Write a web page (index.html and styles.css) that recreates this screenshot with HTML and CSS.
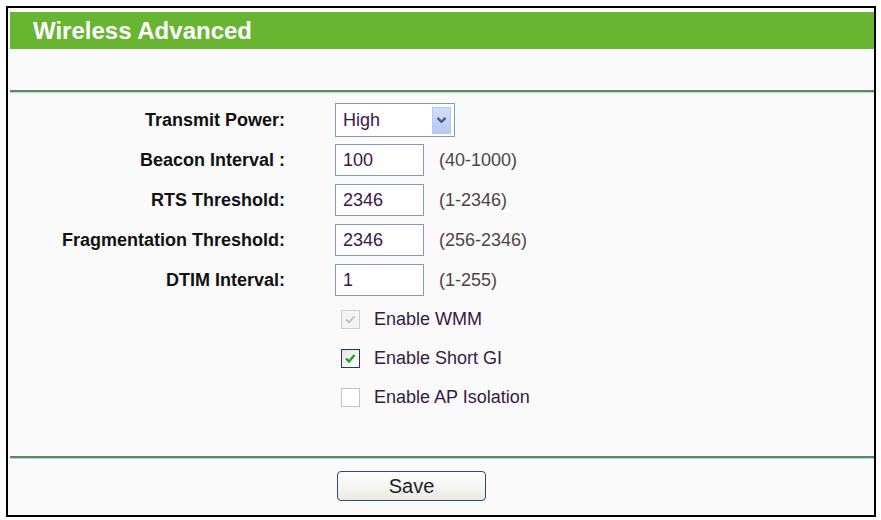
FILE: index.html
```html
<!DOCTYPE html>
<html lang="en">
<head>
    <meta charset="UTF-8">
    <title>Wireless Advanced</title>
    <link rel="stylesheet" href="styles.css">
</head>
<body>
    <div class="panel">
        <div class="title">Wireless Advanced</div>
        <div class="spacer"></div>
        <div class="rule"></div>

        <div class="form">
            <div class="row">
                <label>Transmit Power:</label>
                <div class="field">
                    <div class="select">
                        <span>High</span>
                        <span class="arrow">
                            <svg width="11" height="8" viewBox="0 0 11 8"><path d="M1.5 1.8 L5.5 5.8 L9.5 1.8" fill="none" stroke="#4a5d82" stroke-width="2.4"/></svg>
                        </span>
                    </div>
                </div>
            </div>
            <div class="row">
                <label>Beacon Interval :</label>
                <div class="field"><div class="input">100</div><span class="range">(40-1000)</span></div>
            </div>
            <div class="row">
                <label>RTS Threshold:</label>
                <div class="field"><div class="input">2346</div><span class="range">(1-2346)</span></div>
            </div>
            <div class="row">
                <label>Fragmentation Threshold:</label>
                <div class="field"><div class="input">2346</div><span class="range">(256-2346)</span></div>
            </div>
            <div class="row">
                <label>DTIM Interval:</label>
                <div class="field"><div class="input">1</div><span class="range">(1-255)</span></div>
            </div>
            <div class="row check">
                <span class="blank"></span>
                <div class="field">
                    <span class="box disabled"><svg width="17" height="17" viewBox="0 0 17 17"><path d="M4 8.5 L7 11.5 L12.5 5" fill="none" stroke="#bdbdbd" stroke-width="1.8"/></svg></span>
                    <span class="opt">Enable WMM</span>
                </div>
            </div>
            <div class="row check">
                <span class="blank"></span>
                <div class="field">
                    <span class="box on"><svg width="17" height="17" viewBox="0 0 17 17"><path d="M4 8.5 L7 11.5 L12.5 5" fill="none" stroke="#1d9f22" stroke-width="2.4"/></svg></span>
                    <span class="opt">Enable Short GI</span>
                </div>
            </div>
            <div class="row check">
                <span class="blank"></span>
                <div class="field">
                    <span class="box"></span>
                    <span class="opt">Enable AP Isolation</span>
                </div>
            </div>
        </div>

        <div class="rule rule-bottom"></div>
        <div class="actions">
            <button type="button">Save</button>
        </div>
    </div>
</body>
</html>
```

FILE: styles.css
```css
body { margin: 6px 5px 6px 6px; font-family: "Liberation Sans", Arial, sans-serif; background: #fff; }
.panel { border: 2px solid #000; background: #fafafa; padding: 4px 0 14px 2px; }
.title { height: 37px; background: #68b532; color: #fff; font-size: 24px; font-weight: bold; display: flex; align-items: center; padding-left: 23px; padding-top: 1px; box-sizing: border-box; }
.spacer { height: 41px; }
.rule { height: 2px; background: #55896a; box-shadow: 0 1px 0 #b9dcc4; }
.rule-bottom { margin-top: 39px; }
.form { display: grid; grid-template-columns: 275px 1fr; column-gap: 50px; padding-top: 8px; }
.row { display: contents; }
.row label, .row .field { height: 40px; display: flex; align-items: center; }
.row label { justify-content: flex-end; font-size: 18px; font-weight: bold; color: #111; }
.row.check .field, .row.check .blank { height: 39px; }
.field { font-size: 18px; }
.select { width: 120px; height: 34px; box-sizing: border-box; border: 1px solid #7f9db9; background: #fff; display: flex; align-items: center; justify-content: space-between; padding: 0 3px 0 7px; color: #3b1748; }
.arrow { width: 19px; height: 27px; box-sizing: border-box; border: 1px solid #b8c8ee; background: linear-gradient(#d2defc, #b6c7f3); display: flex; align-items: center; justify-content: center; }
.input { width: 89px; height: 32px; box-sizing: border-box; border: 1px solid #7f9db9; background: #fff; padding-left: 7px; display: flex; align-items: center; color: #3b1748; }
.range { margin-left: 15px; color: #4f4545; }
.box { width: 19px; height: 19px; flex: none; box-sizing: border-box; border: 1px solid #c4c4c4; background: #fff; margin-left: 6px; display: flex; align-items: center; justify-content: center; }
.box.disabled { border-color: #cfcfcf; background: #f4f4f4; }
.box.on { border-color: #1f3a5a; background: linear-gradient(135deg, #e4e4e4, #fff); }
.opt { margin-left: 14px; color: #351a42; }
.actions { display: flex; padding: 13px 0 0 327px; }
button { width: 149px; height: 30px; border: 1px solid #2b4a78; border-radius: 4px; background: linear-gradient(#fefefe, #ebebe4); font-family: "Liberation Sans", Arial, sans-serif; font-size: 20px; color: #1c1c2c; padding: 0; }
```
